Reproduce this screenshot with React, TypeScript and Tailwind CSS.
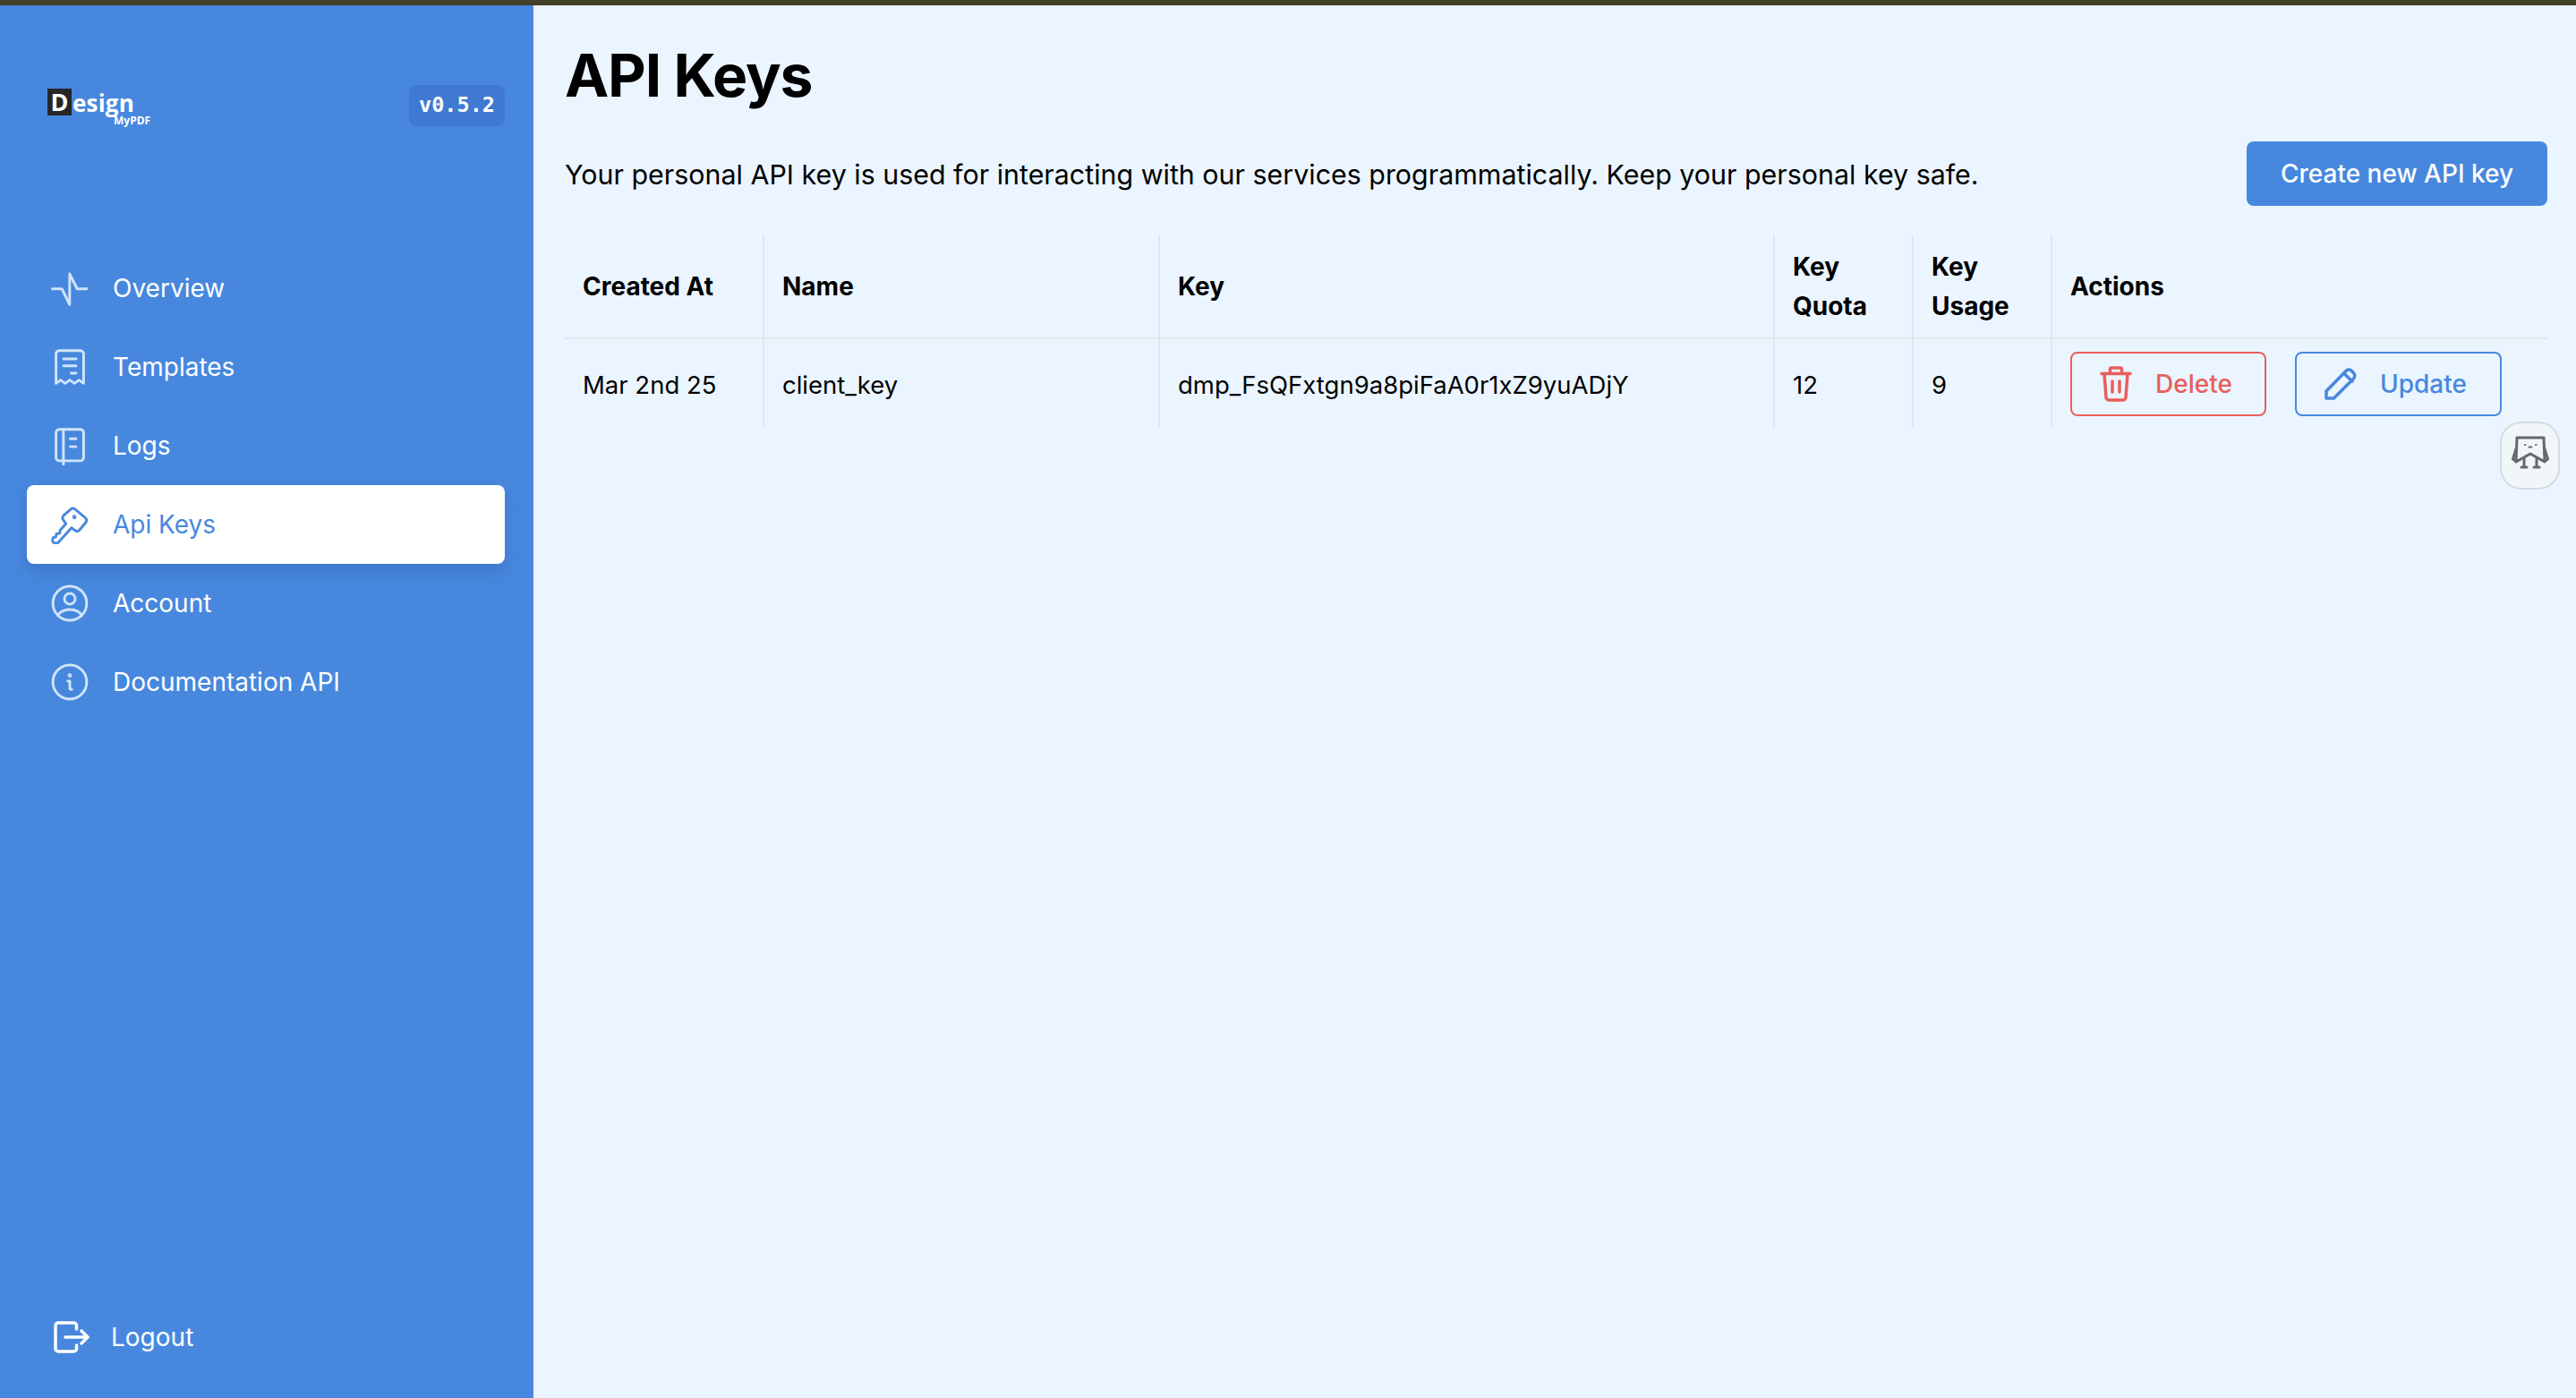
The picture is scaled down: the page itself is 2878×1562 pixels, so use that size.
import type { ReactNode } from "react"

const stroke = {
  fill: "none",
  stroke: "currentColor",
  strokeWidth: 1.6,
  strokeLinecap: "round" as const,
  strokeLinejoin: "round" as const,
}

// Sidebar icons, all on a 24 box
const PulseIcon = () => (
  <svg viewBox="0 0 24 24" className="h-[44px] w-[44px]" {...stroke}>
    <path d="M1.4 12.400H7.200L11.900 22V3.300L16.500 12.400H22.300" />
  </svg>
)

const ReceiptIcon = () => (
  <svg viewBox="0 0 24 24" className="h-[44px] w-[44px]" {...stroke}>
    <path d="M3.600 22V4a2 2 0 0 1 2-2h12.800a2 2 0 0 1 2 2v18l-2.800-2-2.800 2-2.800-2-2.800 2-2.800-2z" />
    <path d="M8.200 7.100h7.600M8.200 11.300h7.600M12.800 15.800h3" />
  </svg>
)

const NotebookIcon = () => (
  <svg viewBox="0 0 24 24" className="h-[44px] w-[44px]" {...stroke}>
    <path d="M5.600 2h12.800a2 2 0 0 1 2 2v15.200a2 2 0 0 1-2 2H5.600a2 2 0 0 1-2-2V4a2 2 0 0 1 2-2z" />
    <path d="M8.100 2v21.500M12.200 7.800h3.600M12.200 12.600h3.600" />
  </svg>
)

const KeyIcon = () => (
  <svg viewBox="0 0 24 24" className="h-[44px] w-[44px]" {...stroke}>
    <path d="M12.200 3.100c.8-1 2-1.100 2.900-.4l6.300 5.200c.9.8 1 2 .3 2.900l-3.700 4.500c-.8.9-2 1-2.900.3L13 14l-7.700 8.600c-.8.9-2.500 1.100-3.300.3-.8-.8-.6-2.200 0-3l1.500-.2.300-2 2-.3.300-1.900 3.600-4-1.600-2.200c-.7-.9-.6-2 .1-2.800z" />
    <circle cx="14.800" cy="7.500" r=".5" />
  </svg>
)

const UserIcon = () => (
  <svg viewBox="0 0 24 24" className="h-[44px] w-[44px]" {...stroke}>
    <ellipse cx="12" cy="12" rx="10.300" ry="10.400" />
    <circle cx="12" cy="9.300" r="3.300" />
    <path d="M4.800 19.500c.8-2.200 3.800-3.700 7.200-3.700s6.400 1.500 7.200 3.700" />
  </svg>
)

const InfoIcon = () => (
  <svg viewBox="0 0 24 24" className="h-[44px] w-[44px]" {...stroke}>
    <ellipse cx="12" cy="12" rx="10.300" ry="10.400" />
    <path d="M10.800 11.500h1.200v4.200c0 .6.400.9 1.100.8" />
    <circle cx="12" cy="8" r=".5" />
  </svg>
)

const LogoutIcon = () => (
  <svg viewBox="0 0 40 36" className="h-[36px] w-[40px]" fill="none" stroke="currentColor" strokeWidth={3.500} strokeLinecap="round" strokeLinejoin="round">
    <path d="M25.500 9V5a3 3 0 0 0-3-3H5a3 3 0 0 0-3 3v26a3 3 0 0 0 3 3h17.500a3 3 0 0 0 3-3v-4" />
    <path d="M13 18h25M31 11l7 7-7 7" />
  </svg>
)

const TrashIcon = () => (
  <svg viewBox="0 0 36 40" className="h-[40px] w-[36px]" fill="none" stroke="currentColor" strokeWidth={3.500} strokeLinecap="round" strokeLinejoin="round">
    <path d="M2 8.500h32M11.500 8.500V3.500a1.500 1.500 0 0 1 1.500-1.500h10a1.500 1.500 0 0 1 1.500 1.500v5" />
    <path d="M5 8.500l2 26.500a3 3 0 0 0 3 3h16a3 3 0 0 0 3-3l2-26.500" />
    <path d="M14 17v12M22 17v12" />
  </svg>
)

const PencilIcon = () => (
  <svg viewBox="0 0 36 36" className="h-[36px] w-[36px]" fill="none" stroke="currentColor" strokeWidth={3.500} strokeLinecap="round" strokeLinejoin="round">
    <path d="M2 26L24 3.500a4.500 4.500 0 0 1 6.500 0l2 2.200a4.500 4.500 0 0 1 0 6.300L10.500 34H2z" />
    <path d="M21.500 6l9.500 9" />
  </svg>
)

const Mascot = () => (
  <svg viewBox="0 0 42 40" className="mb-[6px] h-[40px] w-[42px] text-[#66696b]" fill="none" stroke="currentColor" strokeWidth={3} strokeLinecap="round" strokeLinejoin="round">
    <path d="M6 3H36L37 30L21 21L5 30Z" />
    <path d="M5.500 14L1.500 27l3 2M36.500 14l4 13-3 2" />
    <path d="M14 26v10h-3M14 36h3M28 26v10h3M28 36h-3" />
    <path d="M15 11h.5M27 11h.5M19.500 13.500h3" strokeWidth={2} />
  </svg>
)

type NavItem = { label: string; icon: ReactNode; active?: boolean }

const navItems: NavItem[] = [
  { label: "Overview", icon: <PulseIcon /> },
  { label: "Templates", icon: <ReceiptIcon /> },
  { label: "Logs", icon: <NotebookIcon /> },
  { label: "Api Keys", icon: <KeyIcon />, active: true },
  { label: "Account", icon: <UserIcon /> },
  { label: "Documentation API", icon: <InfoIcon /> },
]

const thClass = "border-r-2 border-[#e2e7ee] pl-[20px] pr-[10px] text-left align-middle text-[28px] font-bold leading-[44px] text-black"
const tdClass = "border-r-2 border-[#e2e7ee] pl-[20px] pr-[10px] pt-[3px] align-middle text-[27.500px] font-normal text-black"

export default function App() {
  return (
    <div className="flex h-screen w-full flex-col overflow-hidden bg-[#ebf5ff] font-['Inter',sans-serif]">
      <div className="h-[6px] shrink-0 bg-[#443f28]" />

      <div className="flex min-h-0 flex-1">
        {/* Sidebar */}
        <aside className="flex w-[596px] shrink-0 flex-col bg-[#4788de] pb-[50px] pl-[30px] pr-[32px] pt-[89px]">
          <div className="flex h-[46px] items-center justify-between">
            <div className="ml-[23px] mt-[3px] flex flex-col">
              <div className="flex items-center font-['Open_Sans',sans-serif] font-bold text-white">
                <span className="flex h-[30px] w-[27px] items-center justify-center bg-[#262626] text-[27px] leading-none">D</span>
                <span className="ml-[1px] mt-[3px] text-[26px] leading-none tracking-[0.2px]">esign</span>
              </div>
              <span className="ml-[74px] font-['Open_Sans',sans-serif] text-[12px] font-bold leading-[12px] text-white">MyPDF</span>
            </div>
            <span className="flex h-[46px] w-[107px] items-center justify-center rounded-[8px] bg-[#3f79d2] font-['DejaVu_Sans_Mono',monospace] text-[23.500px] font-semibold text-white">
              v0.5.2
            </span>
          </div>

          <nav className="mt-[137px] flex flex-col">
            {navItems.map((item) => (
              <a
                key={item.label}
                className={
                  item.active
                    ? "flex h-[88px] items-center gap-[26px] rounded-[8px] bg-white pl-[26px] text-[28px] text-[#4788de] shadow-[0_8px_18px_rgba(40,80,150,0.3)]"
                    : "flex h-[88px] items-center gap-[26px] rounded-[8px] pl-[26px] text-[28px] text-white"
                }
              >
                <span className={item.active ? "" : "text-[#d0e4fa]"}>{item.icon}</span>
                {item.label}
              </a>
            ))}
          </nav>

          <a className="mt-auto flex h-[36px] items-center gap-[24px] pl-[30px] text-[28px] text-white">
            <LogoutIcon />
            Logout
          </a>
        </aside>

        {/* Main content */}
        <main className="relative min-w-0 flex-1 pl-[35px] pr-[32px] pt-[34px]">
          <h1 className="text-[66px] font-bold leading-[88px] tracking-[-1.200px] text-black">API Keys</h1>

          <div className="mt-[30px] flex items-center justify-between">
            <p className="pt-[3px] text-[30.400px] text-black">
              Your personal API key is used for interacting with our services programmatically. Keep your personal key safe.
            </p>
            <button className="flex h-[72px] w-[336px] items-center justify-center rounded-[8px] bg-[#4788de] text-[28px] font-medium text-white">
              Create new API key
            </button>
          </div>

          <table className="mt-[32px] w-full table-fixed border-collapse">
            <thead>
              <tr className="h-[116px] border-b-2 border-[#e2e7ee]">
                <th className={`${thClass} w-[222px]`}>Created At</th>
                <th className={`${thClass} w-[442px]`}>Name</th>
                <th className={`${thClass} w-[687px]`}>Key</th>
                <th className={`${thClass} w-[155px]`}>
                  Key
                  <br />
                  Quota
                </th>
                <th className={`${thClass} w-[155px]`}>
                  Key
                  <br />
                  Usage
                </th>
                <th className="pl-[20px] text-left align-middle text-[28px] font-bold text-black">Actions</th>
              </tr>
            </thead>
            <tbody>
              <tr className="h-[101px]">
                <td className={tdClass}>Mar 2nd 25</td>
                <td className={tdClass}>client_key</td>
                <td className={tdClass}>dmp_FsQFxtgn9a8piFaA0r1xZ9yuADjY</td>
                <td className={tdClass}>12</td>
                <td className={tdClass}>9</td>
                <td className="pl-[20px] align-middle">
                  <div className="flex items-center gap-[32px]">
                    <button className="flex h-[72px] w-[219px] items-center gap-[26px] rounded-[8px] border-2 border-[#e85f5c] pl-[31px] text-[28px] font-medium text-[#e85f5c]">
                      <TrashIcon />
                      Delete
                    </button>
                    <button className="flex h-[72px] w-[231px] items-center gap-[26px] rounded-[8px] border-2 border-[#4788de] pl-[31px] text-[28px] font-medium text-[#4788de]">
                      <PencilIcon />
                      Update
                    </button>
                  </div>
                </td>
              </tr>
            </tbody>
          </table>

          {/* Floating helper widget */}
          <div className="absolute right-[18px] top-[465px] flex h-[76px] w-[67px] items-center justify-center rounded-[24px] border-2 border-[#d5dbe1] bg-[#f1f6f9]">
            <Mascot />
          </div>
        </main>
      </div>
    </div>
  )
}
